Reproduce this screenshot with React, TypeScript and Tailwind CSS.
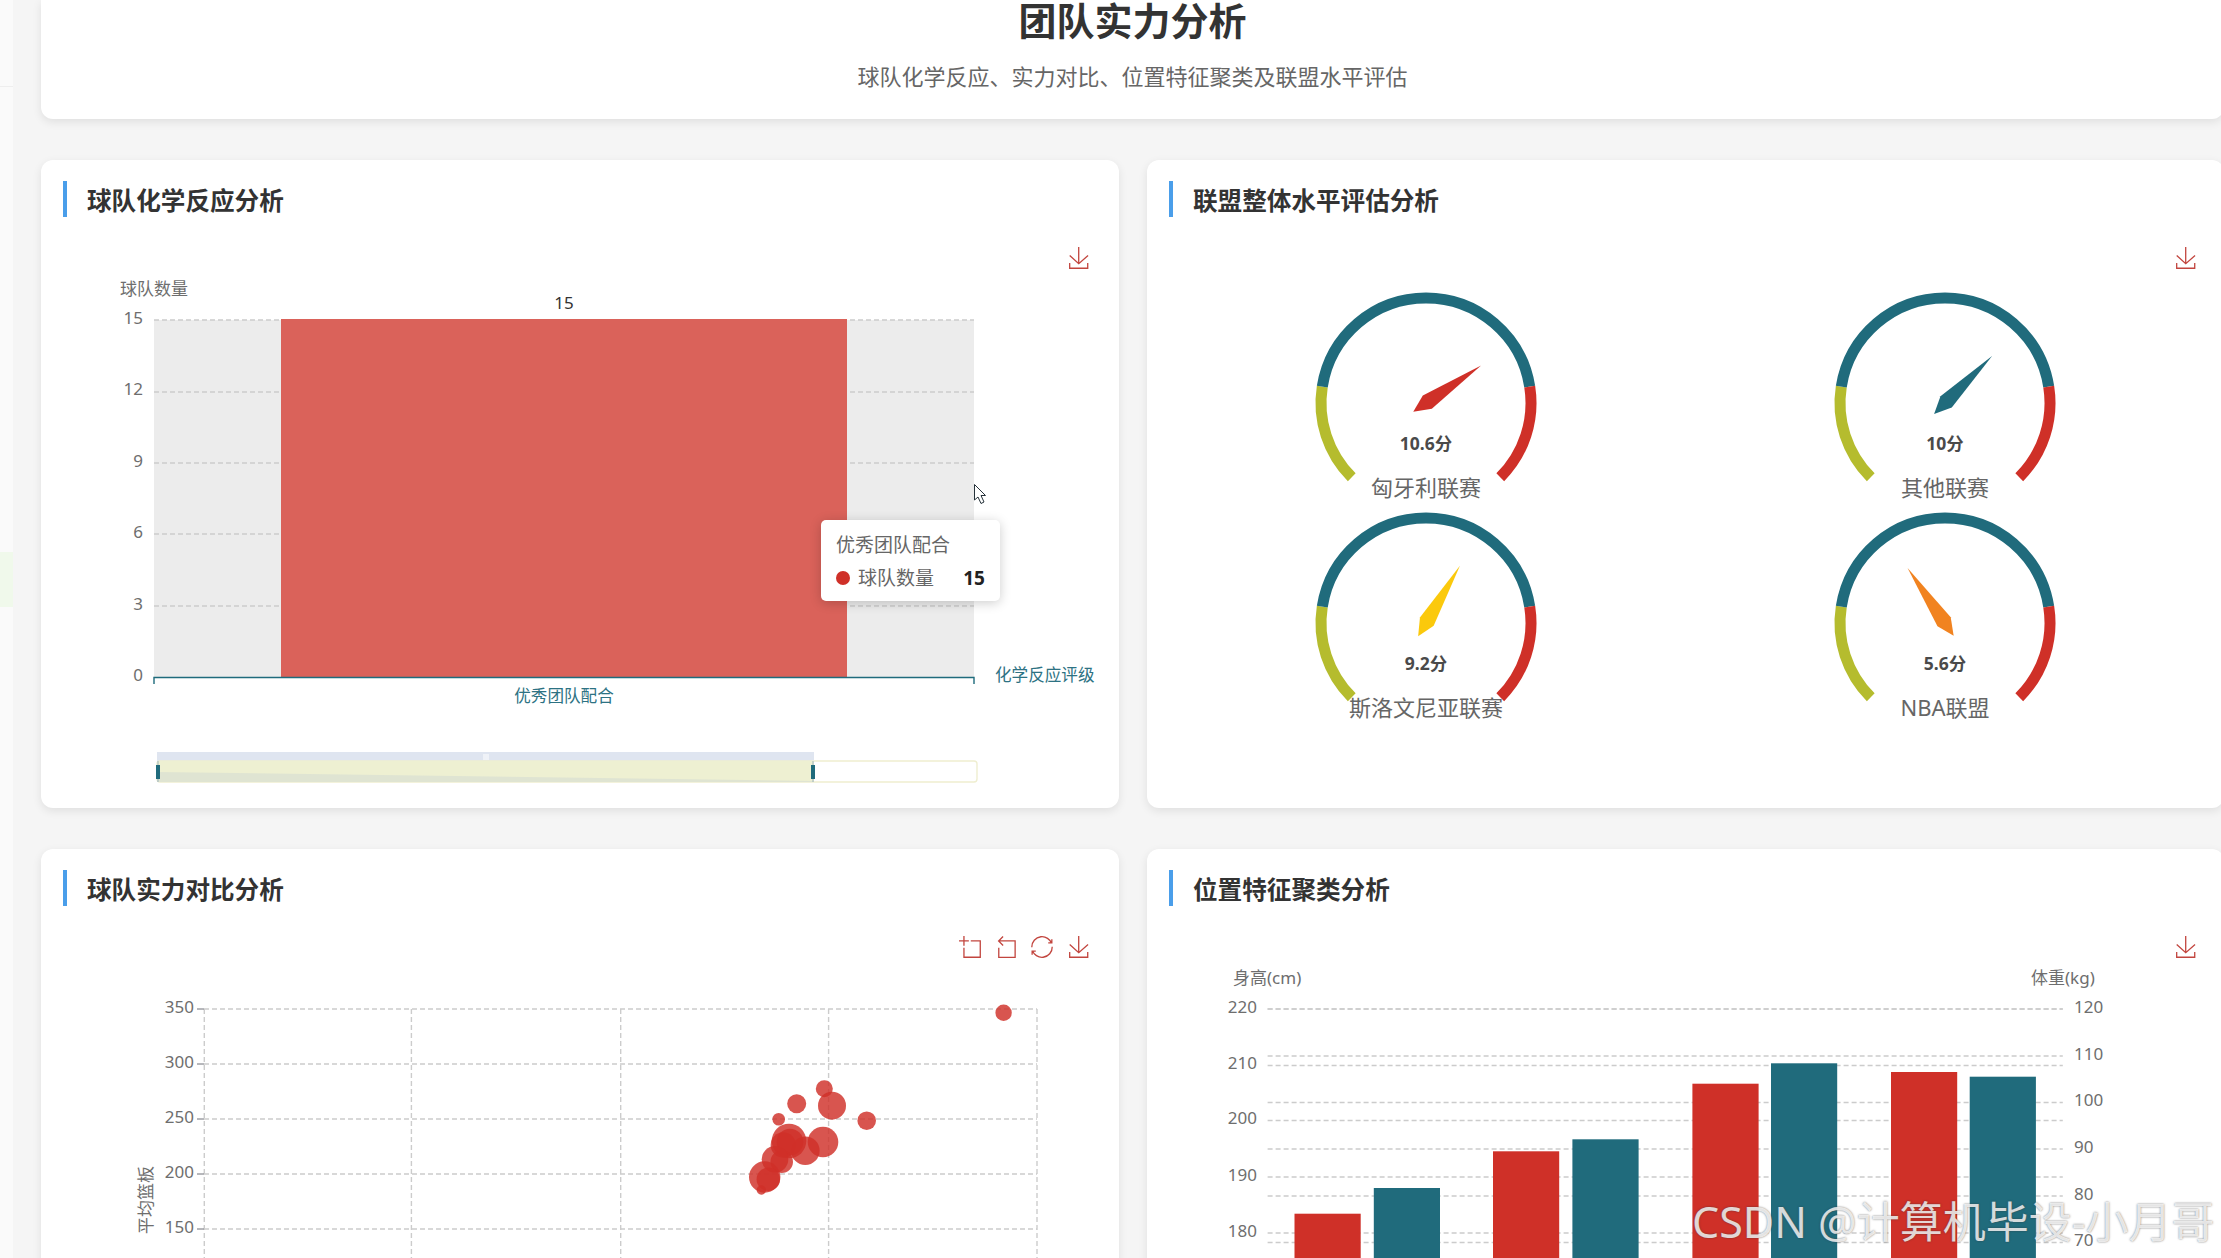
const RED = '#cf3028';
const TEAL = '#206b7c';
const YELLOW = '#b5bc2e';

const SAVE = 'M4.7,22.9L29.3,45.5L54.7,23.4M4.6,43.6L4.6,58L53.8,58L53.8,43.6M29.2,45.1L29.2,0';
const ZOOM = 'M0,13.5h26.9 M13.5,26.9V0 M32.1,13.5H58V58H13.5 V32.1';
const BACK = 'M22,1.4L9.9,13.5l12.3,12.3 M10.3,13.5H54.9v44.6 H10.3v-26';
const RESTORE =
  'M47,18.9h9.8V8.7 M56.3,20.1 C52.1,9,40.5,0.6,26.8,2.1C12.6,3.7,1.6,16.2,2.1,30.6 M13,41.1H3.1v10.2 M3.7,39.9c4.2,11.1,15.8,19.5,29.5,18 c14.2-1.6,25.2-14.1,24.7-28.5';

function ToolIcon({ d, x, y }: { d: string; x: number; y: number }) {
  return (
    <svg x={x} y={y} width={22} height={22} viewBox="0 0 60 60" overflow="visible">
      <path d={d} fill="none" stroke="#c2453e" strokeWidth={1.3} vectorEffect="non-scaling-stroke" />
    </svg>
  );
}

function Grid({ x1, x2, y }: { x1: number; x2: number; y: number }) {
  return <line x1={x1} x2={x2} y1={y} y2={y} stroke="#cccccc" strokeWidth={1.4} strokeDasharray="5 3" />;
}

function Label({
  x,
  y,
  children,
  anchor = 'end',
  fill = '#6e6e6e',
  size = 17,
}: {
  x: number;
  y: number;
  children: React.ReactNode;
  anchor?: 'start' | 'middle' | 'end';
  fill?: string;
  size?: number;
}) {
  return (
    <text x={x} y={y - 0.6} textAnchor={anchor} dominantBaseline="central" fill={fill} fontSize={size}>
      {children}
    </text>
  );
}

function Card({ title, children }: { title: string; children: React.ReactNode }) {
  return (
    <section className="relative h-[648px] rounded-xl bg-white shadow-[0_3px_10px_rgba(0,0,0,0.09)]">
      <div className="pl-[22px] pt-[21px]">
        <h2 className="h-9 border-l-4 border-[#4a9eea] pl-5 text-[24.6px] font-semibold leading-[40px] text-[#333333]">
          {title}
        </h2>
      </div>
      {children}
    </section>
  );
}

function ChemistryChart() {
  const rows = [
    { v: 15, grid: 320, text: 318 },
    { v: 12, grid: 392, text: 389 },
    { v: 9, grid: 463, text: 461 },
    { v: 6, grid: 534, text: 532 },
    { v: 3, grid: 606, text: 604 },
  ];
  return (
    <svg className="block h-[591px] w-[1077px]" viewBox="41 217 1077 591">
      <ToolIcon d={SAVE} x={1068} y={247} />
      <Label x={120} y={289} anchor="start">球队数量</Label>
      <Label x={564} y={303} anchor="middle" fill="#333333">15</Label>
      <rect x={154} y={320} width={820} height={357} fill="#ececec" />
      {rows.map((r) => (
        <g key={r.v}>
          <Grid x1={154} x2={974} y={r.grid} />
          <Label x={143} y={r.text}>{r.v}</Label>
        </g>
      ))}
      <Label x={143} y={675}>0</Label>
      <rect x={281} y={319} width={566} height={358} fill="#da625a" />
      <path d="M154,684V677.5H974V684" fill="none" stroke="#1f6b7c" strokeWidth={1.4} />
      <Label x={564} y={696} anchor="middle" fill="#2d7283" size={16.6}>优秀团队配合</Label>
      <Label x={995} y={675} anchor="start" fill="#2d7283" size={16.6}>化学反应评级</Label>
      {/* data zoom */}
      <rect x={157} y={752} width={657} height={9} fill="#dfe5f0" />
      <path d="M484,754v6M486,754v6M488,754v6" stroke="#ffffff" strokeWidth={1} />
      <rect x={157} y={761} width={820} height={21} rx={3} fill="#ffffff" stroke="#efeed0" strokeWidth={1.4} />
      <rect x={157} y={761} width={657} height={21} fill="#eef0d2" />
      <path d="M157,772L814,781V782H157Z" fill="#dfe4d2" />
      <path d="M158,761V782M813,761V782" stroke="#9db4bd" strokeWidth={1} />
      <rect x={156} y={765} width={4} height={14} fill={TEAL} />
      <rect x={811} y={765} width={4} height={14} fill={TEAL} />
      {/* mouse cursor */}
      <path
        d="M974.5,484.5V500L978,497L981,503.5L984,502L981,495.5H985.5Z"
        fill="#ffffff"
        stroke="#26323a"
        strokeWidth={1}
      />
    </svg>
  );
}

function Gauge({ cx, cy, value, color, name }: { cx: number; cy: number; value: number; color: string; name: string }) {
  const r = 105;
  const point = (deg: number) => {
    const a = (deg * Math.PI) / 180;
    return `${cx + r * Math.cos(a)},${cy - r * Math.sin(a)}`;
  };
  const arc = (from: number, to: number) => `M${point(from)}A${r},${r} 0 ${from - to > 180 ? 1 : 0} 1 ${point(to)}`;
  const rotate = 225 - value * 18 - 90;
  return (
    <g>
      <path d={arc(225, 171)} fill="none" stroke={YELLOW} strokeWidth={11} />
      <path d={arc(171, 9)} fill="none" stroke={TEAL} strokeWidth={11} />
      <path d={arc(9, -45)} fill="none" stroke={RED} strokeWidth={11} />
      <polygon
        points="0,-66.6 8,-1.6 0,15.4 -8,-1.6"
        fill={color}
        transform={`translate(${cx} ${cy}) rotate(${-rotate})`}
      />
      <Label x={cx} y={cy + 41} anchor="middle" fill="#4a4a4a" size={17.5}>
        <tspan fontWeight={700}>{value}分</tspan>
      </Label>
      <Label x={cx} y={cy + 85} anchor="middle" fill="#666666" size={22}>
        {name}
      </Label>
    </g>
  );
}

function LeagueChart() {
  return (
    <svg className="block h-[591px] w-[1077px]" viewBox="1147 217 1077 591">
      <ToolIcon d={SAVE} x={2175} y={247} />
      <Gauge cx={1426} cy={403} value={10.6} color={RED} name="匈牙利联赛" />
      <Gauge cx={1945} cy={403} value={10} color={TEAL} name="其他联赛" />
      <Gauge cx={1426} cy={623} value={9.2} color="#fbc90c" name="斯洛文尼亚联赛" />
      <Gauge cx={1945} cy={623} value={5.6} color="#f18320" name="NBA联盟" />
    </svg>
  );
}

const bubbles = [
  [1003.6, 1012.7, 8.2],
  [824.3, 1088.7, 8.5],
  [832, 1105.7, 14],
  [796.7, 1103.7, 9.5],
  [778.7, 1119.3, 6.3],
  [866.7, 1120.7, 9.3],
  [823, 1142, 15.3],
  [805.3, 1150.7, 14.3],
  [789, 1141, 17.3],
  [783.3, 1145, 12.7],
  [790, 1142, 13.3],
  [781.7, 1161.7, 11.3],
  [775, 1159.3, 13.3],
  [764.7, 1177, 15.7],
  [768.3, 1179.3, 11.7],
  [761.3, 1190, 4.7],
];

function StrengthChart() {
  const ys = [
    { v: 350, y: 1009 },
    { v: 300, y: 1064 },
    { v: 250, y: 1119 },
    { v: 200, y: 1174 },
    { v: 150, y: 1229 },
  ];
  const xs = [204.3, 411.4, 620.7, 828.6, 1037];
  return (
    <svg className="block h-[591px] w-[1077px]" viewBox="41 906 1077 591">
      <ToolIcon d={ZOOM} x={959} y={936} />
      <ToolIcon d={BACK} x={995} y={936} />
      <ToolIcon d={RESTORE} x={1031} y={936} />
      <ToolIcon d={SAVE} x={1068} y={936} />
      {xs.map((x) => (
        <line key={x} x1={x} x2={x} y1={1009} y2={1300} stroke="#cccccc" strokeWidth={1.4} strokeDasharray="5 3" />
      ))}
      {ys.map((r) => (
        <g key={r.v}>
          <Grid x1={204} x2={1037} y={r.y} />
          <line x1={197} x2={204} y1={r.y} y2={r.y} stroke="#6e7079" strokeWidth={1} />
          <Label x={194} y={r.y - 2}>{r.v}</Label>
        </g>
      ))}
      <text
        x={145}
        y={1200}
        transform="rotate(-90 145 1200)"
        textAnchor="middle"
        dominantBaseline="central"
        fill="#6e6e6e"
        fontSize={17}
      >
        平均篮板
      </text>
      {bubbles.map(([x, y, r], i) => (
        <circle key={i} cx={x} cy={y} r={r} fill={RED} fillOpacity={0.82} />
      ))}
    </svg>
  );
}

const leftTicks = [
  { v: 220, y: 1009 },
  { v: 210, y: 1065.5 },
  { v: 200, y: 1120.5 },
  { v: 190, y: 1177 },
  { v: 180, y: 1233 },
];
const rightTicks = [
  { v: 120, y: 1009 },
  { v: 110, y: 1056 },
  { v: 100, y: 1102.5 },
  { v: 90, y: 1149 },
  { v: 80, y: 1196 },
  { v: 70, y: 1242.5 },
];
const clusterBars = [
  { x: 1294.5, top: 1213.7, fill: RED },
  { x: 1373.8, top: 1188, fill: TEAL },
  { x: 1493, top: 1151.3, fill: RED },
  { x: 1572.4, top: 1139.3, fill: TEAL },
  { x: 1692.4, top: 1083.7, fill: RED },
  { x: 1771, top: 1063.3, fill: TEAL },
  { x: 1891, top: 1072, fill: RED },
  { x: 1969.7, top: 1076.7, fill: TEAL },
];

function ClusterChart() {
  return (
    <svg className="block h-[591px] w-[1077px]" viewBox="1147 906 1077 591">
      <ToolIcon d={SAVE} x={2175} y={936} />
      <Label x={1233} y={978} anchor="start">身高(cm)</Label>
      <Label x={2031} y={978} anchor="start">体重(kg)</Label>
      {leftTicks.map((t) => (
        <g key={t.v}>
          <Grid x1={1267.6} x2={2062.8} y={t.y} />
          <Label x={1257} y={t.y - 2}>{t.v}</Label>
        </g>
      ))}
      {rightTicks.map((t) => (
        <g key={t.v}>
          <Grid x1={1267.6} x2={2062.8} y={t.y} />
          <Label x={2074} y={t.y - 2} anchor="start">{t.v}</Label>
        </g>
      ))}
      {clusterBars.map((b) => (
        <rect key={b.x} x={b.x} y={b.top} width={66.2} height={1400 - b.top} fill={b.fill} />
      ))}
    </svg>
  );
}

export default function App() {
  return (
    <div className="relative flex h-[1258px] w-[2221px] overflow-hidden bg-[#f5f5f5] font-['Noto_Sans','Noto_Sans_CJK_SC',sans-serif]">
      {/* edge of the collapsed side menu */}
      <aside className="w-[13px] shrink-0 bg-[#fafafa]">
        <div className="h-[87px] border-b border-[#eeeeee]" />
        <div className="mt-[465px] h-[55px] bg-[#f0f9eb]" />
      </aside>

      <main className="shrink-0 pl-[28px]">
        <header className="h-[119px] w-[2183px] rounded-b-xl bg-white text-center shadow-[0_3px_10px_rgba(0,0,0,0.09)]">
          <h1 className="text-[38px] font-semibold leading-[40px] text-[#333333]">团队实力分析</h1>
          <p className="mt-[21px] text-[22px] leading-[30px] text-[#666666]">
            球队化学反应、实力对比、位置特征聚类及联盟水平评估
          </p>
        </header>

        <div className="mt-[41px] grid grid-cols-[1078px_1077px] gap-x-[28px] gap-y-[41px]">
          <Card title="球队化学反应分析">
            <ChemistryChart />
            <div className="absolute left-[780px] top-[360px] h-[81px] w-[179px] rounded-[5px] bg-white px-[15px] pt-[12px] text-[19px] leading-[26px] text-[#666666] shadow-[0_2px_12px_rgba(0,0,0,0.2)]">
              <div>优秀团队配合</div>
              <div className="mt-[7px] flex items-center">
                <span className="h-[14px] w-[14px] rounded-full bg-[#cf3028]" />
                <span className="ml-2">球队数量</span>
                <span className="ml-auto font-bold text-[#222222]">15</span>
              </div>
            </div>
          </Card>
          <Card title="联盟整体水平评估分析">
            <LeagueChart />
          </Card>
          <Card title="球队实力对比分析">
            <StrengthChart />
          </Card>
          <Card title="位置特征聚类分析">
            <ClusterChart />
          </Card>
        </div>
      </main>

      <div className="absolute left-[1692px] top-[1194px] whitespace-nowrap text-[43px] leading-[56px] text-white/80 [text-shadow:0_0_2px_rgba(50,50,50,0.7)]">
        CSDN @计算机毕设-小月哥
      </div>
    </div>
  );
}
